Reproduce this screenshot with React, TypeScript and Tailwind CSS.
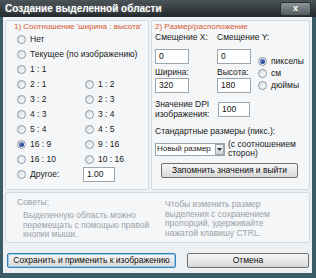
import React from "react";

const font = { fontFamily: '"Liberation Sans", Arial, sans-serif' };

function Radio({ checked = false }: { checked?: boolean }) {
  return (
    <span className="flex h-[9px] w-[9px] shrink-0 items-center justify-center rounded-full border border-[#8d979f] bg-gradient-to-br from-[#d9dde0] to-[#ffffff]">
      {checked && <span className="h-[5px] w-[5px] rounded-full bg-gradient-to-br from-[#6f8fd6] to-[#1c2f7a]" />}
    </span>
  );
}

function RadioRow({ label, checked }: { label: string; checked?: boolean }) {
  return (
    <div className="flex items-center gap-[4px] whitespace-nowrap">
      <Radio checked={checked} />
      <span>{label}</span>
    </div>
  );
}

function Field({ value, w = "w-[34px]" }: { value: string; w?: string }) {
  return (
    <div className={`flex h-[15px] ${w} shrink-0 items-center border border-[#9aa6b0] bg-white pl-[3px] text-[8.5px] text-[#111]`}>
      {value}
    </div>
  );
}

function Btn({ label, primary = false, w }: { label: string; primary?: boolean; w: string }) {
  return (
    <div
      className={`flex h-[15px] ${w} items-center justify-center whitespace-nowrap rounded-[2px] border bg-gradient-to-b from-[#f6f6f6] via-[#e8e8e8] to-[#d6d6d6] text-[8.5px] text-[#111] ${
        primary ? "border-[#3c7fb1] shadow-[inset_0_0_0_1px_#8fd0f0]" : "border-[#707070]"
      }`}
    >
      {label}
    </div>
  );
}

export default function App() {
  const pairs: [string, string][] = [
    ["2 : 1", "1 : 2"],
    ["3 : 2", "2 : 3"],
    ["4 : 3", "3 : 4"],
    ["5 : 4", "4 : 5"],
    ["16 : 9", "9 : 16"],
    ["16 : 10", "10 : 16"],
  ];

  return (
    <div style={font} className="flex h-[278px] w-[316px] flex-col bg-[#3a5c67] text-[8.5px] text-[#1a1a1a]">
      {/* title bar */}
      <div className="flex h-[17px] shrink-0 items-center justify-between bg-gradient-to-b from-[#4b5459] to-[#23292c] pl-[5px] pr-[5px]">
        <span className="whitespace-nowrap text-[10px] font-bold text-white [text-shadow:0_0_3px_rgba(255,255,255,0.35)]">
          Создание выделенной области
        </span>
        <div className="flex h-[14px] w-[31px] items-center justify-center rounded-[3px] border border-[#2a3135] bg-gradient-to-b from-[#8d9498] to-[#555c60] text-[9px] font-bold text-white">
          x
        </div>
      </div>

      {/* body */}
      <div className="ml-[3px] mr-[4px] flex flex-1 flex-col bg-[#eef1f4] px-[2px] pt-[3px]">
        <div className="flex h-[170px] gap-[2px]">
          {/* group 1 */}
          <div className="flex w-[144px] flex-col rounded-[2px] border border-[#d3dbe1] bg-[#f4f6f8] pl-[11px]">
            <div className="ml-[-3px] h-[11px] whitespace-nowrap text-[8px] leading-[11px] text-[#d4582f]">
              1) Соотношение 'ширина : высота'
            </div>
            <div className="flex h-[15px] items-center">
              <RadioRow label="Нет" />
            </div>
            <div className="flex h-[15px] items-center">
              <RadioRow label="Текущее (по изображению)" />
            </div>
            <div className="flex h-[15px] items-center">
              <RadioRow label="1 : 1" />
            </div>
            {pairs.map(([a, b]) => (
              <div key={a} className="grid h-[15px] grid-cols-[68px_1fr] items-center">
                <RadioRow label={a} checked={a === "16 : 9"} />
                <RadioRow label={b} />
              </div>
            ))}
            <div className="grid h-[15px] grid-cols-[66px_1fr] items-center">
              <RadioRow label="Другое:" />
              <Field value="1.00" w="w-[32px]" />
            </div>
          </div>

          {/* group 2 */}
          <div className="flex flex-1 flex-col rounded-[2px] border border-[#d3dbe1] bg-[#f4f6f8] pl-[3px] pr-[2px]">
            <div className="h-[11px] whitespace-nowrap text-[8px] leading-[11px] text-[#d4582f]">2) Размер/расположение</div>
            <div className="flex h-[10px] items-center whitespace-nowrap">
              <span className="w-[62px]">Смещение X:</span>
              <span>Смещение Y:</span>
            </div>
            <div className="flex">
              <div className="flex w-[100px] flex-col">
                <div className="mt-[7px] flex gap-[28px]">
                  <Field value="0" />
                  <Field value="0" />
                </div>
                <div className="mt-[3px] flex h-[10px] items-center whitespace-nowrap">
                  <span className="w-[62px]">Ширина:</span>
                  <span>Высота:</span>
                </div>
                <div className="mt-[1px] flex gap-[28px]">
                  <Field value="320" />
                  <Field value="180" />
                </div>
              </div>
              <div className="ml-[3px] mt-[14px] flex flex-col gap-[2px]">
                <div className="flex h-[10px] items-center">
                  <RadioRow label="пикселы" checked />
                </div>
                <div className="flex h-[10px] items-center">
                  <RadioRow label="см" />
                </div>
                <div className="flex h-[10px] items-center">
                  <RadioRow label="дюймы" />
                </div>
              </div>
            </div>
            <div className="mt-[6px] flex items-center">
              <div className="w-[63px] whitespace-nowrap leading-[10px]">
                Значение DPI
                <br />
                изображения:
              </div>
              <Field value="100" w="w-[32px]" />
            </div>
            <div className="mt-[7px] h-[10px] whitespace-nowrap leading-[10px]">Стандартные размеры (пикс.):</div>
            <div className="mt-[4px] flex items-center gap-[3px]">
              <div className="flex h-[13px] w-[70px] items-center border border-[#9aa6b0] bg-white">
                <span className="flex-1 overflow-hidden whitespace-nowrap pl-[1px] text-[8px]">Новый размер</span>
                <span className="flex h-[11px] w-[9px] shrink-0 items-center justify-center border border-[#9aa6b0] bg-gradient-to-b from-[#f2f2f2] to-[#d2d2d2]">
                  <svg width="5" height="3" viewBox="0 0 5 3">
                    <path d="M0 0h5L2.5 3z" fill="#333" />
                  </svg>
                </span>
              </div>
              <div className="whitespace-nowrap leading-[9px]">
                (с соотношением
                <br />
                сторон)
              </div>
            </div>
            <div className="mt-[5px] pl-[6px]">
              <Btn label="Запомнить значения и выйти" w="w-[137px]" />
            </div>
          </div>
        </div>

        {/* tips */}
        <div className="mt-[2px] flex h-[51px] rounded-[2px] border border-[#d3dbe1] bg-[#f4f6f8] text-[#9aa2a8]">
          <div className="w-[155px] pl-[11px] pt-[4px]">
            <div className="leading-[10px]">Советы:</div>
            <div className="mt-[4px] whitespace-nowrap pl-[6px] leading-[9.5px]">
              Выделенную область можно
              <br />
              перемещать с помощью правой
              <br />
              кнопки мыши.
            </div>
          </div>
          <div className="whitespace-nowrap pl-[4px] pt-[7px] leading-[9.5px]">
            Чтобы изменить размер
            <br />
            выделения с сохранением
            <br />
            пропорций, удерживайте
            <br />
            нажатой клавишу CTRL.
          </div>
        </div>

        {/* buttons */}
        <div className="mt-[10px] flex justify-between pl-[2px] pr-[1px]">
          <Btn label="Сохранить и применить к изображению" primary w="w-[169px]" />
          <Btn label="Отмена" w="w-[122px]" />
        </div>
      </div>
      <div className="h-[5px] shrink-0" />
    </div>
  );
}
